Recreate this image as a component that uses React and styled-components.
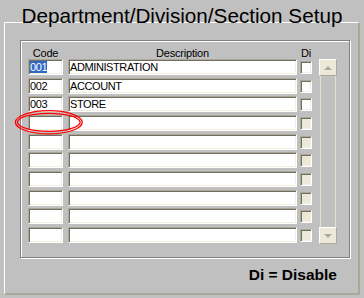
import React from "react";
import styled, { createGlobalStyle } from "styled-components";

const GlobalStyle = createGlobalStyle`
  html, body {
    margin: 0;
    padding: 0;
    background: #c0c0c0;
  }
  body {
    font-family: "Liberation Sans", Arial, sans-serif;
  }
`;

const Page = styled.div`
  position: relative;
  width: 364px;
  height: 298px;
  box-sizing: border-box;
  padding: 9px 4px 0;
  overflow: hidden;
  background: #c0c0c0;
`;

const Title = styled.h1`
  margin: 0;
  font-size: 20.7px;
  font-weight: normal;
  line-height: 14px;
  text-align: center;
  color: #000;
`;

const Frame = styled.div`
  margin-top: -1px;
  display: flex;
  flex-direction: column;
  border-style: solid;
  border-width: 1px 2px 2px 1px;
  border-color: #fff #aca899 #aca899 #fff;
  padding: 17px 8px 9px 15px;
`;

const Panel = styled.div`
  height: 218px;
  box-sizing: border-box;
  border: 1px solid #808080;
  box-shadow: inset 1px 1px 0 #fff, 1px 1px 0 #fff;
  padding: 6px 12px 0 7px;
`;

const Header = styled.div`
  display: flex;
  height: 12px;
  font-size: 11px;
  letter-spacing: -0.2px;
  line-height: 12px;
  color: #000;
`;

const HeadLabel = styled.div`
  width: ${(p) => p.w}px;
  margin-left: ${(p) => p.gap || 0}px;
  text-align: ${(p) => p.align || "center"};
  padding-left: ${(p) => (p.align === "left" ? 1 : 0)}px;
  box-sizing: border-box;
  white-space: nowrap;
`;

const Body = styled.div`
  display: flex;
  align-items: flex-start;
`;

const Rows = styled.div`
  display: flex;
  flex-direction: column;
  gap: 2.67px;
`;

const Row = styled.div`
  display: flex;
  height: 16px;
`;

const Field = styled.div`
  width: ${(p) => p.w}px;
  margin-left: ${(p) => p.gap || 0}px;
  height: 16px;
  box-sizing: border-box;
  border: 1px solid;
  border-color: #aca899 #fff #fff #aca899;
  box-shadow: inset 1px 1px 0 #716f64, inset -1px -1px 0 #f1efe2;
  background: #fff;
  padding: 1px 0 0 1px;
  font-size: 11px;
  letter-spacing: -0.4px;
  line-height: 12px;
  color: #000;
  white-space: nowrap;
  overflow: hidden;
`;

const Selected = styled.span`
  background: #316ac5;
  color: #fff;
`;

const Check = styled.div`
  width: 12px;
  height: 13px;
  margin: 2px 0 0 3px;
  box-sizing: border-box;
  border: 1px solid;
  border-color: #aca899 #fff #fff #aca899;
  box-shadow: inset 1px 1px 0 #716f64, inset -1px -1px 0 #f1efe2;
  background: ${(p) => (p.disabled ? "#ece9d8" : "#fff")};
`;

const ScrollBar = styled.div`
  display: flex;
  flex-direction: column;
  width: 18px;
  height: 185px;
  margin-left: 7px;
`;

const ScrollButton = styled.div`
  height: 17px;
  box-sizing: border-box;
  border: 1px solid;
  border-color: #fff #aca899 #aca899 #fff;
  background: #ece9d8;
  display: flex;
  align-items: center;
  justify-content: center;

  &::after {
    content: "";
    width: 0;
    height: 0;
    border-left: 4px solid transparent;
    border-right: 4px solid transparent;
    ${(p) =>
      p.down
        ? "border-top: 4px solid #aca899;"
        : "border-bottom: 4px solid #aca899;"}
  }
`;

const Track = styled.div`
  flex: 1;
  margin: 0 1px;
  border-left: 1px solid #e6e3d6;
  border-right: 1px solid #e6e3d6;
`;

const Legend = styled.div`
  margin-top: 8px;
  padding-right: 13px;
  text-align: right;
  font-size: 15.5px;
  font-weight: bold;
  line-height: 18px;
  color: #000;
`;

const Mark = styled.svg`
  position: absolute;
  left: 13px;
  top: 108px;
  width: 72px;
  height: 29px;
  pointer-events: none;
`;

const records = [
  { code: "001", desc: "ADMINISTRATION", selected: true },
  { code: "002", desc: "ACCOUNT" },
  { code: "003", desc: "STORE" },
  ...Array.from({ length: 7 }, () => ({ code: "", desc: "", empty: true })),
];

const App = () => {
  return (
    <Page>
      <GlobalStyle />
      <Title>Department/Division/Section Setup</Title>
      <Frame>
        <Panel>
          <Header>
            <HeadLabel w={35}>Code</HeadLabel>
            <HeadLabel w={229} gap={5}>
              Description
            </HeadLabel>
            <HeadLabel w={14} gap={3} align="left">
              Di
            </HeadLabel>
          </Header>
          <Body>
            <Rows>
              {records.map((rec, i) => (
                <Row key={i}>
                  <Field w={35}>
                    {rec.selected ? <Selected>{rec.code}</Selected> : rec.code}
                  </Field>
                  <Field w={229} gap={5}>
                    {rec.desc}
                  </Field>
                  <Check disabled={rec.empty} />
                </Row>
              ))}
            </Rows>
            <ScrollBar>
              <ScrollButton />
              <Track />
              <ScrollButton down />
            </ScrollBar>
          </Body>
        </Panel>
        <Legend>Di = Disable</Legend>
      </Frame>
      <Mark viewBox="0 0 72 29">
        <ellipse cx="35.8" cy="14.3" rx="33.4" ry="11.6" fill="none" stroke="#ff0000" strokeWidth="1.3" />
        <ellipse cx="35.8" cy="14.3" rx="31.3" ry="9" fill="none" stroke="#ff0000" strokeWidth="1.3" />
      </Mark>
    </Page>
  );
};

export default App;
